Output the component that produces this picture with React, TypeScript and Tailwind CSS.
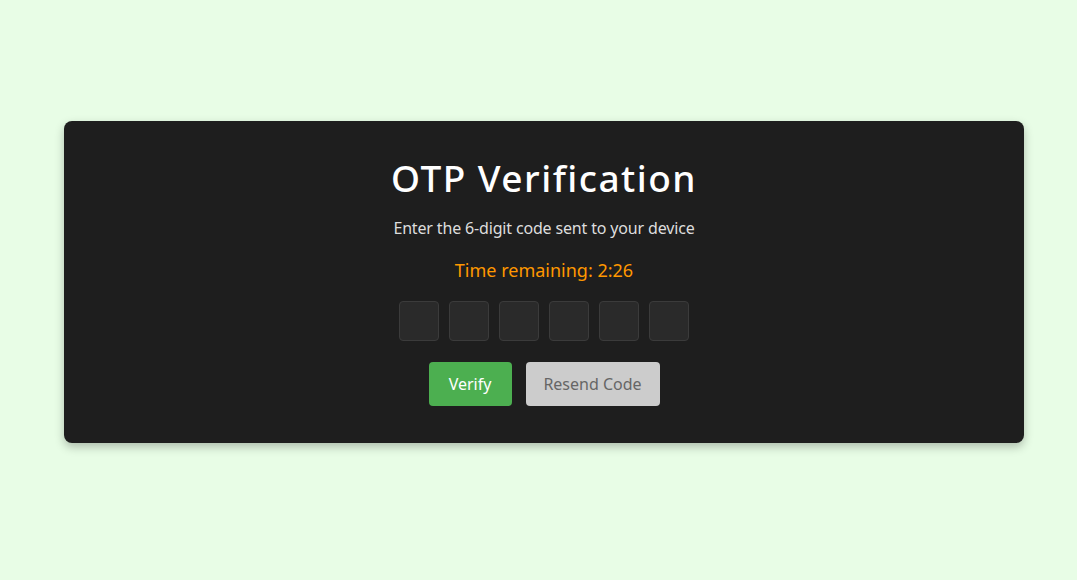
export default function App() {
  const boxes = [0, 1, 2, 3, 4, 5]
  return (
    <div
      className="min-h-[580px] w-full bg-[#e8fde6] pt-[121px] pl-[64px]"
      style={{ fontFamily: '"Noto Sans", "Open Sans", sans-serif' }}
    >
      <div className="w-[960px] h-[322px] rounded-lg bg-[#1e1e1e] shadow-[0_4px_10px_rgba(0,0,0,0.25)] pt-[35px] flex flex-col items-center">
        <h1 className="text-[37px] leading-[44px] font-medium tracking-[0.04em] text-white">OTP Verification</h1>
        <p className="mt-[16px] text-[16px] leading-[24px] text-[#dddddd] tracking-[-0.01em]">Enter the 6-digit code sent to your device</p>
        <p className="mt-[16px] text-[18px] leading-[28px] text-[#ff9800]">Time remaining: 2:26</p>
        <div className="mt-[17px] flex gap-[10px]">
          {boxes.map((b) => (
            <input
              key={b}
              maxLength={1}
              className="w-[40px] h-[40px] rounded bg-[#2a2a2a] border border-[#3b3b3b] text-center text-white text-lg outline-none"
            />
          ))}
        </div>
        <div className="mt-[21px] flex gap-[14px]">
          <button className="h-[44px] w-[83px] rounded bg-[#4caf50] text-white text-[16px]">Verify</button>
          <button className="h-[44px] w-[134px] rounded bg-[#cccccc] text-[#666666] text-[16px]">Resend Code</button>
        </div>
      </div>
    </div>
  )
}
